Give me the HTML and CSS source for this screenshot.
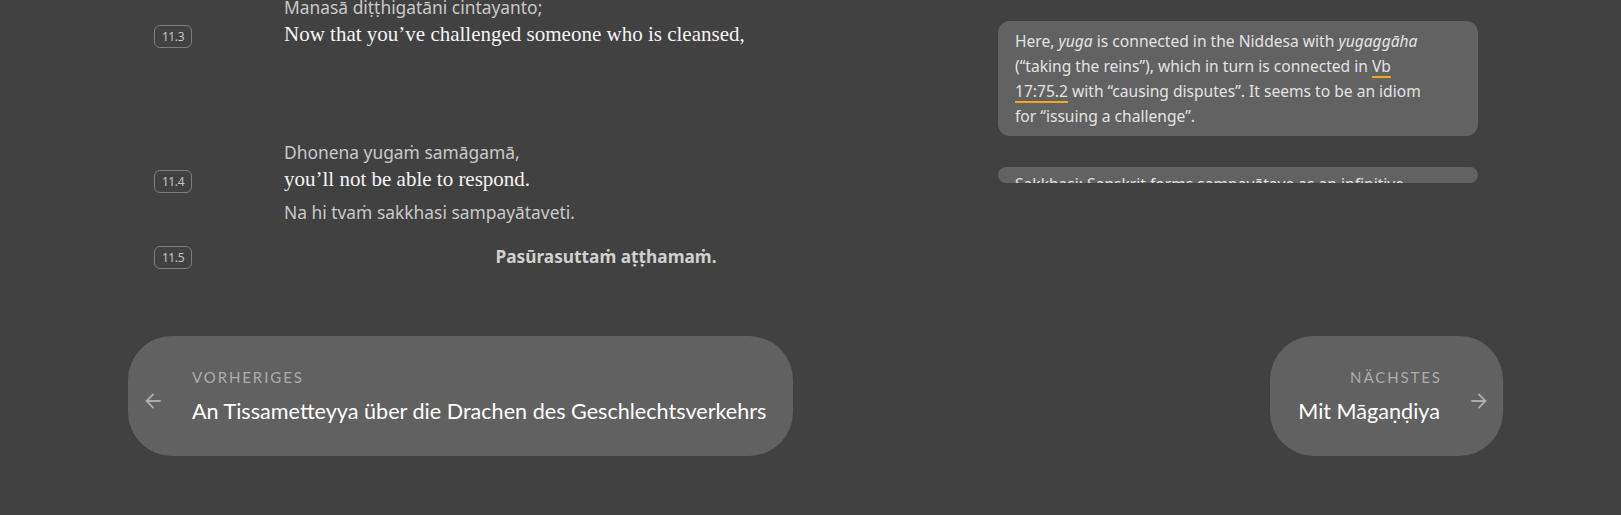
FILE: index.html
```html
<!DOCTYPE html>
<html lang="en">
<head>
<meta charset="utf-8">
<title>Pasūrasutta</title>
<link rel="stylesheet" href="styles.css">
</head>
<body>
<main class="page">
  <div class="text-area">
    <div class="seg seg-a">
      <div class="ref-col"><span class="ref">11.3</span></div>
      <div class="text-col">
        <p class="pali">Manasā diṭṭhigatāni cintayanto;</p>
        <p class="trans">Now that you’ve challenged someone who is cleansed,</p>
      </div>
      <aside class="note-col note-col-a">
        <div class="note">Here, <i>yuga</i> is connected in the Niddesa with <i>yugaggāha</i> (“taking the reins”), which in turn is connected in <a class="ref-link" href="#">Vb 17:75.2</a> with “causing disputes”. It seems to be an idiom for “issuing a challenge”.</div>
      </aside>
    </div>
    <div class="seg seg-b">
      <div class="ref-col"><span class="ref">11.4</span></div>
      <div class="text-col">
        <p class="pali">Dhonena yugaṁ samāgamā,</p>
        <p class="trans">you’ll not be able to respond.</p>
        <p class="pali pali-next">Na hi tvaṁ sakkhasi sampayātaveti.</p>
      </div>
      <aside class="note-col note-col-b">
        <div class="note note-clipped">Sakkhasi: Sanskrit forms sampayātave as an infinitive with the sense “to reply”.</div>
      </aside>
    </div>
    <div class="seg seg-c">
      <div class="ref-col"><span class="ref ref-heading">11.5</span></div>
      <div class="text-col">
        <p class="heading">Pasūrasuttaṁ aṭṭhamaṁ.</p>
      </div>
    </div>
  </div>
  <nav class="pager">
    <a class="pager-btn pager-prev" href="#">
      <svg class="arrow" width="16" height="16" viewBox="0 0 16 16" aria-hidden="true"><path d="M15 8H1.5M8 1.5L1.5 8L8 14.5" fill="none" stroke="currentColor" stroke-width="1.8" stroke-linecap="round" stroke-linejoin="round"/></svg>
      <span class="pager-text">
        <span class="pager-label">Vorheriges</span>
        <span class="pager-title">An Tissametteyya über die Drachen des Geschlechtsverkehrs</span>
      </span>
    </a>
    <a class="pager-btn pager-next" href="#">
      <span class="pager-text">
        <span class="pager-label">Nächstes</span>
        <span class="pager-title">Mit Māgaṇḍiya</span>
      </span>
      <svg class="arrow" width="16" height="16" viewBox="0 0 16 16" aria-hidden="true"><path d="M1 8H14.5M8 1.5L14.5 8L8 14.5" fill="none" stroke="currentColor" stroke-width="1.8" stroke-linecap="round" stroke-linejoin="round"/></svg>
    </a>
  </nav>
</main>
</body>
</html>
```
FILE: styles.css
```css
html, body {
  margin: 0;
  padding: 0;
}
body {
  background: #414141;
  font-family: "Noto Sans", "Liberation Sans", sans-serif;
  overflow: hidden;
}
p { margin: 0; }

.page {
  padding-left: 128px;
  width: 1375px;
}

.text-area {
  margin-top: -6px;
  padding-left: 26px;
}

.seg {
  display: flex;
  align-items: flex-start;
}
.seg-c { margin-top: 19px; }

.ref-col {
  width: 130px;
  flex: none;
}
.ref {
  display: inline-flex;
  align-items: center;
  justify-content: center;
  box-sizing: border-box;
  width: 38px;
  height: 23px;
  margin-top: 31px;
  border: 1px solid #7c7c7c;
  border-radius: 6px;
  font-family: "Noto Sans", sans-serif;
  font-size: 12px;
  color: #c4c4c4;
  letter-spacing: -0.4px;
}
.ref-heading { margin-top: 2px; }

.text-col {
  width: 644px;
  flex: none;
}
.pali {
  font-family: "Noto Sans", "Liberation Sans", sans-serif;
  font-size: 17.4px;
  line-height: 26px;
  color: #c9c9c9;
}
.pali-next { margin-top: 6px; }
.trans {
  font-family: "Liberation Serif", serif;
  font-size: 21px;
  line-height: 28px;
  color: #f4f4f4;
}
.heading {
  font-family: "Noto Sans", "Liberation Sans", sans-serif;
  font-size: 17.3px;
  font-weight: bold;
  line-height: 26px;
  color: #d0d0d0;
  text-align: center;
}

.note-col {
  width: 480px;
  margin-left: 70px;
  flex: none;
}
.note-col-a { margin-top: 27px; padding-bottom: 3px; }
.note-col-b { margin-top: 28px; }
.note {
  background: #626262;
  border-radius: 12px;
  padding: 8px 50px 7px 17px;
  font-family: "Noto Sans", "Liberation Sans", sans-serif;
  font-size: 15.6px;
  line-height: 25px;
  color: #e2e2e2;
}
.note-clipped {
  height: 16px;
  padding-top: 5px;
  padding-bottom: 0;
  box-sizing: border-box;
  overflow: hidden;
  border-radius: 8px;
}
.ref-link {
  color: inherit;
  text-decoration: underline;
  text-decoration-color: #f0a81c;
  text-decoration-thickness: 2px;
  text-underline-offset: 4px;
}

.pager {
  display: flex;
  justify-content: space-between;
  margin-top: 66px;
}
.pager-btn {
  display: flex;
  align-items: center;
  gap: 31px;
  height: 120px;
  box-sizing: border-box;
  background: #616161;
  border-radius: 44px;
  text-decoration: none;
}
.pager-prev { padding: 0 27px 0 17px; }
.pager-next { padding: 0 16px 0 28px; }
.arrow {
  color: #acacac;
  flex: none;
  margin-top: 10px;
}
.pager-text {
  display: flex;
  flex-direction: column;
}
.pager-next .pager-text { align-items: flex-end; }
.pager-label {
  font-family: Lato, "Liberation Sans", sans-serif;
  font-size: 15px;
  line-height: 20px;
  letter-spacing: 1.9px;
  text-transform: uppercase;
  color: #acacac;
  margin-bottom: 9px;
}
.pager-next .pager-label { margin-right: -1.9px; }
.pager-title {
  font-family: Lato, "Liberation Sans", sans-serif;
  font-size: 21.6px;
  line-height: 30px;
  color: #ffffff;
}
```
